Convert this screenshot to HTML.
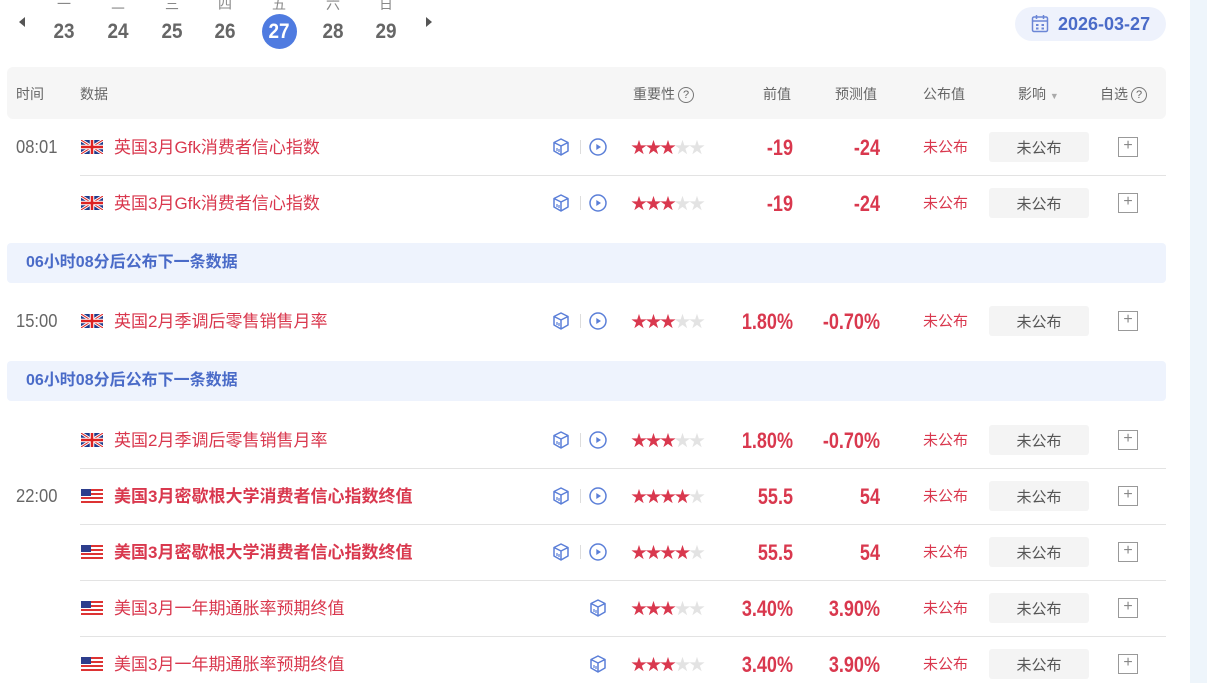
<!DOCTYPE html>
<html><head><meta charset="utf-8"><style>
*{margin:0;padding:0;box-sizing:border-box}
body{width:1207px;height:683px;overflow:hidden;background:#fff;font-family:"Liberation Sans","Noto Sans CJK SC",sans-serif;position:relative}
.a{position:absolute}
.strip{left:1190px;top:0;width:17px;height:683px;background:#eef5fb}
.wd{top:-6px;font-size:14px;color:#888;width:40px;text-align:center}
.dn{top:20px;font-size:21px;color:#666;width:40px;text-align:center;font-weight:bold;transform:scaleX(.9)}
.circ{left:262px;top:14px;width:35px;height:35px;border-radius:50%;background:#4f7be0}
.pill{left:1015px;top:7px;width:151px;height:34px;border-radius:17px;background:#eef2fc;color:#4a6bc8;font-weight:bold;font-size:18px;line-height:34px;padding-left:43px}
.hdr{left:7px;top:67px;width:1159px;height:52px;background:#f6f6f6;border-radius:6px}
.h{top:84px;font-size:14px;color:#666}
.q{display:inline-block;width:16px;height:16px;border:1px solid #777;border-radius:50%;font-size:11px;text-align:center;line-height:14px;vertical-align:1px;margin-left:3px}
.ban{left:7px;width:1159px;height:40px;background:#eef3fd;border-radius:4px;color:#4a6bc8;font-weight:bold;font-size:16px;line-height:40px;padding-left:19px}
.sep{left:80px;width:1086px;height:1px;background:#e3e3e3}
.tm{left:16px;font-size:18px;color:#666;transform:scaleX(.92);transform-origin:left;margin-top:1px}
.fl{left:81px;width:22px;height:14px}
.nm{left:114px;font-size:17px;color:#d9384e;white-space:nowrap;margin-top:-3px}
.nm.b{font-weight:bold}
.ic{width:20px;height:20px}
.vs{left:580px;width:1px;height:14px;background:#ddd}
.st{left:631px;font-size:16px;letter-spacing:-1.5px;color:#d9384e;margin-top:-4px}
.st i{font-style:normal;color:#e3e3e3}
.num{font-size:22px;font-weight:bold;color:#d9384e;text-align:right;width:120px;transform:scaleX(.82);transform-origin:right;margin-top:0px}
.pub{left:923px;font-size:15px;color:#d9384e;margin-top:-1px}
.imp{left:989px;width:100px;height:30px;background:#f4f4f4;border-radius:3px;text-align:center;line-height:33px;font-size:15px;color:#555;overflow:hidden}
.pl{left:1118px;width:20px;height:20px;border:1.5px solid #999;color:#888;text-align:center;line-height:16px;font-size:16px}
</style></head><body>
<div class="a strip"></div>
<svg class="a" style="left:17px;top:16px" width="10" height="12"><path d="M8 1 L2 6 L8 11Z" fill="#555"/></svg>
<svg class="a" style="left:424px;top:16px" width="10" height="12"><path d="M2 1 L8 6 L2 11Z" fill="#555"/></svg>
<div class="a wd" style="left:44px">一</div><div class="a wd" style="left:98px">二</div><div class="a wd" style="left:152px">三</div><div class="a wd" style="left:205px">四</div><div class="a wd" style="left:259px">五</div><div class="a wd" style="left:313px">六</div><div class="a wd" style="left:366px">日</div>
<div class="a circ"></div>
<div class="a dn" style="left:44px">23</div><div class="a dn" style="left:98px">24</div><div class="a dn" style="left:152px">25</div><div class="a dn" style="left:205px">26</div><div class="a dn" style="left:259px;color:#fff">27</div><div class="a dn" style="left:313px">28</div><div class="a dn" style="left:366px">29</div>
<div class="a pill">2026-03-27</div>
<svg class="a" style="left:1031px;top:14px" width="18" height="19"><rect x="1.5" y="3" width="15" height="14.5" rx="1.5" fill="none" stroke="#6b86d6" stroke-width="1.5"/><path d="M1.5 7h15M5.5 1v4M12.5 1v4" stroke="#6b86d6" stroke-width="1.5"/><rect x="5" y="10" width="2.5" height="2" fill="#6b86d6"/><rect x="10.5" y="10" width="2.5" height="2" fill="#6b86d6"/><rect x="5" y="13.5" width="2.5" height="2" fill="#6b86d6"/><rect x="10.5" y="13.5" width="2.5" height="2" fill="#6b86d6"/></svg>
<div class="a hdr"></div>
<div class="a h" style="left:16px">时间</div><div class="a h" style="left:80px">数据</div>
<div class="a h" style="left:633px">重要性<span class="q">?</span></div>
<div class="a h" style="left:763px">前值</div><div class="a h" style="left:835px">预测值</div><div class="a h" style="left:923px">公布值</div>
<div class="a h" style="left:1018px">影响 <span style="font-size:9px;color:#aaa">▼</span></div>
<div class="a h" style="left:1100px">自选<span class="q">?</span></div>

<svg width="0" height="0" style="position:absolute"><defs>
<g id="uk"><rect width="22" height="14" fill="#1f3a8a"/><path d="M0 0L22 14M22 0L0 14" stroke="#fff" stroke-width="3"/><path d="M0 0L22 14M22 0L0 14" stroke="#d22" stroke-width="1"/><path d="M11 0V14M0 7H22" stroke="#fff" stroke-width="4.5"/><path d="M11 0V14M0 7H22" stroke="#d22" stroke-width="2.5"/></g>
<g id="us"><rect width="22" height="14" fill="#fff"/><path d="M0 1H22M0 5H22M0 9H22M0 13H22" stroke="#d33" stroke-width="2"/><rect width="10" height="7" fill="#2d3d8c"/></g>
<g id="cube"><path d="M10 2L17 5.5V14L10 18L3 14V5.5Z M3 5.5L10 9L17 5.5M10 9V18" fill="none" stroke="#5b7fd8" stroke-width="1.5" stroke-linejoin="round"/><path d="M6 11v3M8 12v3" stroke="#5b7fd8" stroke-width="1.2"/></g>
<g id="play"><circle cx="10" cy="10" r="8" fill="none" stroke="#5b7fd8" stroke-width="1.5"/><path d="M8.3 7v6l4.7-3z" fill="#5b7fd8"/></g>
</defs></svg>

<!-- row1 -->
<div class="a tm" style="top:136px">08:01</div>
<svg class="a fl" style="top:140px"><use href="#uk"/></svg><div class="a nm" style="top:136px">英国3月Gfk消费者信心指数</div>
<svg class="a ic" style="left:551px;top:137px"><use href="#cube"/></svg><div class="a vs" style="top:140px"></div><svg class="a ic" style="left:588px;top:137px"><use href="#play"/></svg>
<div class="a st" style="top:138px">★★★<i>★★</i></div>
<div class="a num" style="left:673px;top:135px">-19</div><div class="a num" style="left:760px;top:135px">-24</div>
<div class="a pub" style="top:137px">未公布</div><div class="a imp" style="top:132px">未公布</div><div class="a pl" style="top:137px">+</div>
<div class="a sep" style="top:175px"></div>
<!-- row2 -->
<svg class="a fl" style="top:196px"><use href="#uk"/></svg><div class="a nm" style="top:192px">英国3月Gfk消费者信心指数</div>
<svg class="a ic" style="left:551px;top:193px"><use href="#cube"/></svg><div class="a vs" style="top:196px"></div><svg class="a ic" style="left:588px;top:193px"><use href="#play"/></svg>
<div class="a st" style="top:194px">★★★<i>★★</i></div>
<div class="a num" style="left:673px;top:191px">-19</div><div class="a num" style="left:760px;top:191px">-24</div>
<div class="a pub" style="top:193px">未公布</div><div class="a imp" style="top:188px">未公布</div><div class="a pl" style="top:193px">+</div>

<div class="a ban" style="top:243px">06小时08分后公布下一条数据</div>
<!-- row3 -->
<div class="a tm" style="top:310px">15:00</div>
<svg class="a fl" style="top:314px"><use href="#uk"/></svg><div class="a nm" style="top:310px">英国2月季调后零售销售月率</div>
<svg class="a ic" style="left:551px;top:311px"><use href="#cube"/></svg><div class="a vs" style="top:314px"></div><svg class="a ic" style="left:588px;top:311px"><use href="#play"/></svg>
<div class="a st" style="top:312px">★★★<i>★★</i></div>
<div class="a num" style="left:673px;top:309px">1.80%</div><div class="a num" style="left:760px;top:309px">-0.70%</div>
<div class="a pub" style="top:311px">未公布</div><div class="a imp" style="top:306px">未公布</div><div class="a pl" style="top:311px">+</div>

<div class="a ban" style="top:361px">06小时08分后公布下一条数据</div>
<!-- row4 -->
<svg class="a fl" style="top:433px"><use href="#uk"/></svg><div class="a nm" style="top:429px">英国2月季调后零售销售月率</div>
<svg class="a ic" style="left:551px;top:430px"><use href="#cube"/></svg><div class="a vs" style="top:433px"></div><svg class="a ic" style="left:588px;top:430px"><use href="#play"/></svg>
<div class="a st" style="top:431px">★★★<i>★★</i></div>
<div class="a num" style="left:673px;top:428px">1.80%</div><div class="a num" style="left:760px;top:428px">-0.70%</div>
<div class="a pub" style="top:430px">未公布</div><div class="a imp" style="top:425px">未公布</div><div class="a pl" style="top:430px">+</div>
<div class="a sep" style="top:468px"></div>
<!-- row5 -->
<div class="a tm" style="top:485px">22:00</div>
<svg class="a fl" style="top:489px"><use href="#us"/></svg><div class="a nm b" style="top:485px">美国3月密歇根大学消费者信心指数终值</div>
<svg class="a ic" style="left:551px;top:486px"><use href="#cube"/></svg><div class="a vs" style="top:489px"></div><svg class="a ic" style="left:588px;top:486px"><use href="#play"/></svg>
<div class="a st" style="top:487px">★★★★<i>★</i></div>
<div class="a num" style="left:673px;top:484px">55.5</div><div class="a num" style="left:760px;top:484px">54</div>
<div class="a pub" style="top:486px">未公布</div><div class="a imp" style="top:481px">未公布</div><div class="a pl" style="top:486px">+</div>
<div class="a sep" style="top:524px"></div>
<!-- row6 -->
<svg class="a fl" style="top:545px"><use href="#us"/></svg><div class="a nm b" style="top:541px">美国3月密歇根大学消费者信心指数终值</div>
<svg class="a ic" style="left:551px;top:542px"><use href="#cube"/></svg><div class="a vs" style="top:545px"></div><svg class="a ic" style="left:588px;top:542px"><use href="#play"/></svg>
<div class="a st" style="top:543px">★★★★<i>★</i></div>
<div class="a num" style="left:673px;top:540px">55.5</div><div class="a num" style="left:760px;top:540px">54</div>
<div class="a pub" style="top:542px">未公布</div><div class="a imp" style="top:537px">未公布</div><div class="a pl" style="top:542px">+</div>
<div class="a sep" style="top:580px"></div>
<!-- row7 -->
<svg class="a fl" style="top:601px"><use href="#us"/></svg><div class="a nm" style="top:597px">美国3月一年期通胀率预期终值</div>
<svg class="a ic" style="left:588px;top:598px"><use href="#cube"/></svg>
<div class="a st" style="top:599px">★★★<i>★★</i></div>
<div class="a num" style="left:673px;top:596px">3.40%</div><div class="a num" style="left:760px;top:596px">3.90%</div>
<div class="a pub" style="top:598px">未公布</div><div class="a imp" style="top:593px">未公布</div><div class="a pl" style="top:598px">+</div>
<div class="a sep" style="top:636px"></div>
<!-- row8 -->
<svg class="a fl" style="top:657px"><use href="#us"/></svg><div class="a nm" style="top:653px">美国3月一年期通胀率预期终值</div>
<svg class="a ic" style="left:588px;top:654px"><use href="#cube"/></svg>
<div class="a st" style="top:655px">★★★<i>★★</i></div>
<div class="a num" style="left:673px;top:652px">3.40%</div><div class="a num" style="left:760px;top:652px">3.90%</div>
<div class="a pub" style="top:654px">未公布</div><div class="a imp" style="top:649px">未公布</div><div class="a pl" style="top:654px">+</div>
</body></html>
